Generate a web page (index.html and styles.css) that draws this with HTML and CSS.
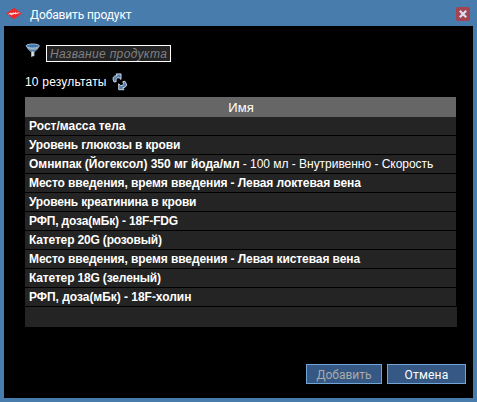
FILE: index.html
```html
<!DOCTYPE html>
<html lang="ru">
<head>
<meta charset="utf-8">
<title>Добавить продукт</title>
<link rel="stylesheet" href="styles.css">
</head>
<body>
<div class="window">
  <header class="titlebar">
    <svg class="logo" width="16" height="14" viewBox="0 0 16 14"><path d="M8 .8Q10.5 2.8 15.7 6.4Q10.5 10.2 8 12.2Q5.5 10.2.3 6.4Q5.5 2.8 8 .8Z" fill="#ed2929"/><path d="M2.6 7.4L4.3 6L4.3 7.4L6.2 6.1L5.6 7.9L7.8 5.8L7.8 7.2L9.6 5.4L9.6 7L11.2 6L13.3 6" fill="none" stroke="#fff" stroke-width=".9"/></svg>
    <h1 class="title">Добавить продукт</h1>
    <button class="close" aria-label="Закрыть"><svg width="14" height="14" viewBox="0 0 14 14"><path d="M3.8 3.8L10.2 10.2M10.2 3.8L3.8 10.2" stroke="#d5e3f4" stroke-width="2.2"/></svg></button>
  </header>
  <main class="content">
    <div class="filter">
      <svg width="16" height="16" viewBox="0 0 16 16"><path d="M1.5 3.5Q2 6 6 9V14L9.5 13V9Q13.5 6 14 3.5Z" fill="#9aa9b8"/><path d="M7 7H8.6V13H7Z" fill="#dce3ea"/><ellipse cx="7.7" cy="3" rx="6.7" ry="2" fill="#3c76b5" stroke="#a9bdd2" stroke-width="1"/><path d="M3 6Q7.5 8 12.5 6L10 8.5H5.5Z" fill="#487cae"/></svg>
      <input class="search" placeholder="Название продукта">
    </div>
    <div class="results"><span class="count">10 результаты</span>
      <svg width="16" height="18" viewBox="0 0 16 18"><g fill="#587ca8" stroke="#d5e4f4" stroke-width=".9" stroke-linejoin="round"><path d="M2 9Q-1 3 5 2.6L4.2.9H9V6.4L7.2 4.8Q3.2 4.3 4.2 8.7Z"/><path d="M12.9 8.2Q17 14 10.8 14.8L12 16.7H6.7V10.8L8.7 12.6Q12.7 12.4 10.8 8.7Z"/></g></svg>
    </div>
    <div class="table">
      <div class="head">Имя</div>
      <div class="row"><b>Рост/масса тела</b></div>
      <div class="row tight"><b>Уровень глюкозы в крови</b></div>
      <div class="row slight"><b>Омнипак (Йогексол) 350 мг йода/мл</b><span class="detail"> - 100 мл - Внутривенно - Скорость</span></div>
      <div class="row snug"><b>Место введения, время введения - Левая локтевая вена</b></div>
      <div class="row tight"><b>Уровень креатинина в крови</b></div>
      <div class="row tight"><b>РФП, доза(мБк) - 18F-FDG</b></div>
      <div class="row tight"><b>Катетер 20G (розовый)</b></div>
      <div class="row snug"><b>Место введения, время введения - Левая кистевая вена</b></div>
      <div class="row tight"><b>Катетер 18G (зеленый)</b></div>
      <div class="row slight"><b>РФП, доза(мБк) - 18F-холин</b></div>
      <div class="foot"></div>
    </div>
    <div class="actions"><button class="button" disabled>Добавить</button><button class="button cancel">Отмена</button></div>
  </main>
</div>
</body>
</html>
```
FILE: styles.css
```css
* { box-sizing: border-box; }
body { margin: 0; font: 12px "Liberation Sans", sans-serif; color: #fff; background: #487cad; }
.window { width: 477px; height: 402px; padding: 0 4px 4px; display: flex; flex-direction: column; }
.titlebar { height: 26px; flex: none; display: flex; align-items: center; padding: 2px 3px 0 2px; }
.logo { margin-right: 8px; }
.title { margin: 1px 0 0; font: 12px Roboto, sans-serif; letter-spacing: -0.12px; flex: 1; }
.close { width: 14px; height: 14px; padding: 0; border: 0; border-radius: 2px; background: #a54450; display: flex; }
.content { flex: 1; min-height: 0; background: #000; padding: 17px 7px 14px 21px; display: flex; flex-direction: column; }
.filter { display: flex; gap: 5px; height: 19px; }
.filter svg { flex: none; }
.search { width: 125px; height: 17px; margin-top: 2px; border: 1px solid #fff; border-radius: 0; background: #242424; color: #fff; padding: 0 0 0 3px; font: italic 12px "Liberation Sans", sans-serif; letter-spacing: 0.34px; }
.search::placeholder { color: #808080; opacity: 1; }
.results { display: flex; align-items: center; gap: 5px; height: 18px; margin-top: 11px; }
.count { letter-spacing: 0.2px; }
.table { width: 432px; margin-top: 6px; }
.head { width: 431px; height: 20px; background: #666; text-align: center; line-height: 21px; font-size: 13px; letter-spacing: 0.1px; padding-left: 1px; }
.row { width: 431px; height: 19px; padding-left: 4px; background: #242424; border-bottom: 1px solid #000; line-height: 18px; white-space: pre; }
.tight { letter-spacing: -0.16px; }
.snug { letter-spacing: -0.09px; }
.slight { letter-spacing: -0.03px; }
.foot { height: 20px; background: #242424; }
.actions { margin-top: auto; display: flex; justify-content: flex-end; gap: 5px; }
.button { width: 76px; height: 20px; padding: 1px 0 0; border: 1px solid #71a5d5; background: #355984; color: #fff; font: 12px Roboto, sans-serif; }
.button:disabled { color: #aaa; }
.cancel { width: 79px; letter-spacing: 0.2px; }
```
